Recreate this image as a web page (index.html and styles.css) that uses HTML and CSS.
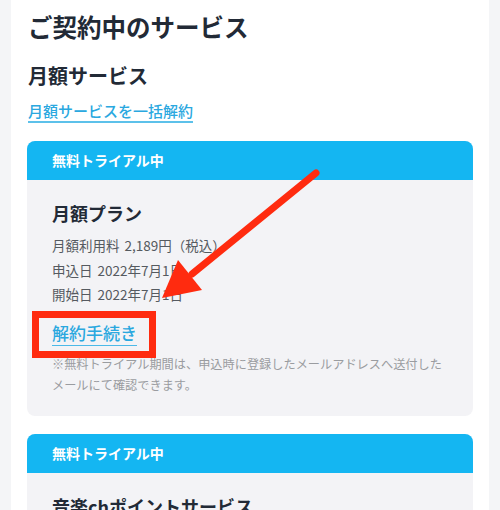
FILE: index.html
```html
<!DOCTYPE html>
<html lang="ja">
<head>
<meta charset="utf-8">
<link rel="stylesheet" href="styles.css">
</head>
<body>
<main class="panel">
  <h1 class="title">ご契約中のサービス</h1>
  <h2 class="subtitle">月額サービス</h2>
  <a class="link bulk" href="#">月額サービスを一括解約</a>

  <section class="card">
    <div class="card-head">無料トライアル中</div>
    <div class="card-body">
      <h3 class="plan">月額プラン</h3>
      <ul class="info">
        <li>月額利用料 2,189円（税込）</li>
        <li>申込日 2022年7月1日</li>
        <li>開始日 2022年7月1日</li>
      </ul>
      <a class="link cancel" href="#">解約手続き</a>
      <p class="note">※無料トライアル期間は、申込時に登録したメールアドレスへ送付したメールにて確認できます。</p>
    </div>
  </section>

  <section class="card">
    <div class="card-head">無料トライアル中</div>
    <div class="card-body">
      <h3 class="plan">音楽chポイントサービス</h3>
    </div>
  </section>
</main>

<div class="mark-box"></div>
<svg class="mark-arrow" width="500" height="510" viewBox="0 0 500 510">
  <line x1="316" y1="173" x2="192" y2="274" stroke="#ff2b0f" stroke-width="7" stroke-linecap="round"/>
  <polygon points="162,298 178,260 202,290" fill="#ff2b0f"/>
</svg>
</body>
</html>
```

FILE: styles.css
```css
html, body {
  margin: 0;
  padding: 0;
}
body {
  background: #f4f5f7;
  font-family: "Noto Sans CJK JP", "Noto Sans", sans-serif;
  width: 500px;
  height: 510px;
  overflow: hidden;
  position: relative;
}
.panel {
  margin: 0 11px;
  background: #ffffff;
  padding: 10px 16px 0;
  min-height: 500px;
}
.title {
  margin: 0;
  font-size: 24.5px;
  line-height: 34px;
  font-weight: 700;
  color: #222a36;
  padding-left: 1px;
}
.subtitle {
  margin: 17px 0 0;
  font-size: 20px;
  line-height: 30px;
  font-weight: 700;
  color: #222a36;
  padding-left: 1px;
}
.link {
  display: inline-block;
  color: #2aa8df;
  text-decoration: none;
}
.bulk {
  margin: 10px 0 0 1px;
  font-size: 15px;
  line-height: 20px;
  font-weight: 500;
  border-bottom: 2px solid #5cc1ea;
}
.card {
  margin-top: 18px;
  border-radius: 8px;
  background: #f3f3f6;
  overflow: hidden;
}
.card-head {
  background: #14b6f2;
  color: #ffffff;
  font-size: 14px;
  font-weight: 700;
  height: 39px;
  line-height: 39px;
  padding-left: 25px;
}
.card-body {
  padding: 20px 26px 20px 25px;
}
.plan {
  margin: 0;
  font-size: 18px;
  line-height: 26px;
  font-weight: 700;
  color: #222a36;
}
.info {
  list-style: none;
  margin: 7px 0 0;
  padding: 0;
  font-size: 13.5px;
  line-height: 24.5px;
  color: #555a60;
  word-spacing: 2px;
}
.cancel {
  margin-top: 14px;
  font-size: 17px;
  line-height: 24px;
  font-weight: 500;
  border-bottom: 1.5px solid #4cb9e8;
}
.note {
  margin: 8px 0 0;
  font-size: 12.2px;
  line-height: 21px;
  color: #9a9ca0;
}
.mark-box {
  position: absolute;
  left: 32px;
  top: 311px;
  width: 110px;
  height: 33px;
  border: 7px solid #ff2b0f;
}
.mark-arrow {
  position: absolute;
  left: 0;
  top: 0;
}
```
